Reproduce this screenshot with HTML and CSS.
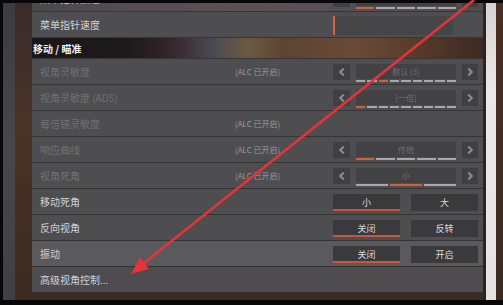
FILE: index.html
```html
<!DOCTYPE html>
<html lang="zh">
<head>
<meta charset="utf-8">
<title>设置</title>
<link rel="stylesheet" href="styles.css">
</head>
<body>
<div class="screen">
  <div class="gutter-left"><div class="g-gray"></div><div class="g-brown"></div></div>
  <div class="panel">
    <div class="row cut">
      <span class="label">菜单指针加速</span>
      <span class="note"></span>
      <div class="stepper">
        <div class="arr"><svg viewBox="0 0 16 16"><polyline points="10,4 6,8 10,12"/></svg></div>
        <div class="box"><div class="val"></div><div class="segs"><i class="on"></i><i></i><i></i><i></i><i></i></div></div>
        <div class="arr"><svg viewBox="0 0 16 16"><polyline points="6,4 10,8 6,12"/></svg></div>
      </div>
    </div>
    <div class="row">
      <span class="label">菜单指针速度</span>
      <span class="note"></span>
      <div class="slider"><div class="knob"></div></div>
    </div>
    <div class="header">移动 / 瞄准</div>
    <div class="row off">
      <span class="label">视角灵敏度</span>
      <span class="note">(ALC 已开启)</span>
      <div class="stepper">
        <div class="arr"><svg viewBox="0 0 16 16"><polyline points="10,4 6,8 10,12"/></svg></div>
        <div class="box"><div class="val">默认 (3)</div><div class="segs"><i></i><i></i><i class="on"></i><i></i><i></i><i></i><i></i><i></i><i></i></div></div>
        <div class="arr"><svg viewBox="0 0 16 16"><polyline points="6,4 10,8 6,12"/></svg></div>
      </div>
    </div>
    <div class="row off">
      <span class="label">视角灵敏度 (ADS)</span>
      <span class="note"></span>
      <div class="stepper">
        <div class="arr"><svg viewBox="0 0 16 16"><polyline points="10,4 6,8 10,12"/></svg></div>
        <div class="box"><div class="val">[一倍]</div><div class="segs"><i class="on"></i><i></i><i></i><i></i><i></i><i></i><i></i><i></i><i></i></div></div>
        <div class="arr"><svg viewBox="0 0 16 16"><polyline points="6,4 10,8 6,12"/></svg></div>
      </div>
    </div>
    <div class="row off">
      <span class="label">每倍镜灵敏度</span>
      <span class="note">(ALC 已开启)</span>
      <span></span>
    </div>
    <div class="row off">
      <span class="label">响应曲线</span>
      <span class="note">(ALC 已开启)</span>
      <div class="stepper">
        <div class="arr"><svg viewBox="0 0 16 16"><polyline points="10,4 6,8 10,12"/></svg></div>
        <div class="box"><div class="val">传统</div><div class="segs"><i class="on"></i><i></i><i></i><i></i><i></i></div></div>
        <div class="arr"><svg viewBox="0 0 16 16"><polyline points="6,4 10,8 6,12"/></svg></div>
      </div>
    </div>
    <div class="row off">
      <span class="label">视角死角</span>
      <span class="note">(ALC 已开启)</span>
      <div class="stepper">
        <div class="arr"><svg viewBox="0 0 16 16"><polyline points="10,4 6,8 10,12"/></svg></div>
        <div class="box"><div class="val">小</div><div class="segs"><i></i><i class="on"></i><i></i></div></div>
        <div class="arr"><svg viewBox="0 0 16 16"><polyline points="6,4 10,8 6,12"/></svg></div>
      </div>
    </div>
    <div class="row">
      <span class="label">移动死角</span>
      <span class="note"></span>
      <div class="pair"><div class="btn sel">小</div><div class="btn">大</div></div>
    </div>
    <div class="row">
      <span class="label">反向视角</span>
      <span class="note"></span>
      <div class="pair"><div class="btn sel">关闭</div><div class="btn">反转</div></div>
    </div>
    <div class="row hi">
      <span class="label">振动</span>
      <span class="note"></span>
      <div class="pair"><div class="btn sel">关闭</div><div class="btn">开启</div></div>
    </div>
    <div class="row">
      <span class="label">高级视角控制...</span>
      <span class="note"></span>
      <span></span>
    </div>
  </div>
  <div class="gutter-right"><div class="r-dark"></div><div class="r-white"></div><div class="r-brown"></div></div>
</div>
<svg class="pointer" viewBox="0 0 503 305" width="503" height="305">
  <line x1="474" y1="0" x2="144" y2="263" />
  <polygon points="131,274 149,269 140,257" />
</svg>
</body>
</html>
```

FILE: styles.css
```css
html, body {
  margin: 0;
  padding: 0;
}
body {
  width: 503px;
  height: 305px;
  overflow: hidden;
  background: #080808;
  position: relative;
  font-family: "Noto Sans CJK SC", "Noto Sans", sans-serif;
}
.screen {
  margin-top: 3px;
  margin-left: 3px;
  width: 500px;
  height: 297px;
  display: flex;
  overflow: hidden;
}
.gutter-left {
  display: flex;
  width: 29px;
  flex: none;
}
.g-gray {
  width: 12px;
  background: linear-gradient(180deg, #3c3c40 0%, #48484c 50%, #404044 100%);
}
.g-brown {
  width: 17px;
  background: linear-gradient(180deg, #3a2c2a 0%, #4a3226 40%, #3e2a20 100%);
}
.panel {
  width: 451px;
  flex: none;
  margin-top: -17px;
  display: flex;
  flex-direction: column;
  gap: 1px;
  background: linear-gradient(180deg, #3e3434 0%, #363436 30%, #333234 85%, #3a2a22 100%);
}
.row {
  height: 25px;
  flex: none;
  display: grid;
  grid-template-columns: 195px 98px 145px;
  align-items: center;
  padding-left: 8px;
  background: rgba(80, 79, 83, 0.92);
  font-size: 10px;
  color: #d2d2d4;
  position: relative;
}
.row.cut {
  background: linear-gradient(90deg, rgba(78,74,78,0.95) 0%, rgba(92,82,86,0.95) 45%, rgba(80,78,82,0.95) 100%);
}
.row.hi {
  background: #5a5a5e;
}
.row.off .label {
  color: #717174;
}
.label {
  white-space: nowrap;
  line-height: 1;
}
.note {
  font-size: 8px;
  color: #9c9c9e;
  white-space: nowrap;
}
.header {
  height: 20px;
  flex: none;
  display: flex;
  align-items: center;
  padding-left: 1px;
  font-size: 10px;
  font-weight: 700;
  color: #f2f2f2;
  background: linear-gradient(90deg, #1a1718 0%, #1e1a1c 22%, #2c2224 28%, #3e3036 34%, #4a4a54 40%, #6a5a40 48%, #5e4432 56%, #6a4a36 72%, #563a2a 86%, #3c2a22 100%);
}
.stepper {
  align-self: start;
  margin-top: 5px;
  display: flex;
  gap: 6px;
  align-items: flex-start;
}
.arr {
  width: 17px;
  height: 16px;
  background: #404042;
  display: flex;
  align-items: center;
  justify-content: center;
}
.arr:last-child {
  width: 16px;
}
.arr svg {
  width: 14px;
  height: 14px;
}
.arr polyline {
  fill: none;
  stroke: #8c8c90;
  stroke-width: 2.4;
}
.box {
  width: 100px;
  display: flex;
  flex-direction: column;
}
.val {
  height: 15px;
  background: #424244;
  color: #6e6e72;
  font-size: 8px;
  display: flex;
  align-items: center;
  justify-content: center;
}
.segs {
  margin-top: 1px;
  display: flex;
  gap: 2px;
  height: 2px;
}
.segs i {
  flex: 1;
  background: #a8a8aa;
}
.segs i.on {
  background: #d0603c;
}
.slider {
  align-self: start;
  margin-top: 4px;
  width: 120px;
  height: 19px;
  background: #454547;
  display: flex;
}
.knob {
  width: 2px;
  background: #d8643e;
}
.pair {
  align-self: start;
  margin-top: 5px;
  display: flex;
  gap: 11px;
}
.btn {
  width: 67px;
  height: 17px;
  box-sizing: border-box;
  background: #3a3a3c;
  color: #d8d8da;
  font-size: 9px;
  display: flex;
  align-items: center;
  justify-content: center;
}
.btn.sel {
  border-bottom: 2px solid #c9553a;
  padding-top: 2px;
}
.gutter-right {
  display: flex;
  flex: none;
  width: 20px;
}
.r-dark {
  width: 3px;
  background: #2a2424;
}
.r-white {
  width: 10px;
  background: linear-gradient(180deg, #d8d2d2 0%, #ece8e8 30%, #e6e2e2 100%);
}
.r-brown {
  width: 7px;
  background: linear-gradient(180deg, #4a2e24 0%, #3a2a22 100%);
}
.pointer {
  position: absolute;
  left: 0;
  top: 0;
}
.pointer line {
  stroke: #e4343a;
  stroke-width: 2.6;
}
.pointer polygon {
  fill: #e4343a;
}
```
